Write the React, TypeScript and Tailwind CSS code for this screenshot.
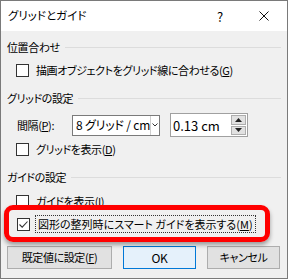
import React from "react";

const font = "font-['Noto_Sans_CJK_JP','Noto_Sans',sans-serif] [font-feature-settings:'palt']";

function Header({ children }: { children: React.ReactNode }) {
  return (
    <div className="flex items-center h-[22px] pr-[6px]">
      <span className="leading-none">{children}</span>
      <div className="flex-1 h-px bg-[#dcdcdc] ml-[5px]" />
    </div>
  );
}

function Box({ checked = false }: { checked?: boolean }) {
  return (
    <div className="w-[13px] h-[13px] border border-[#333333] bg-white flex items-center justify-center shrink-0">
      {checked && (
        <svg width="11" height="11" viewBox="0 0 11 11">
          <path d="M1.5 5.5 L4.2 8.2 L9.5 2.5" fill="none" stroke="#333" strokeWidth="1.1" />
        </svg>
      )}
    </div>
  );
}

function Check({ children, checked = false }: { children: React.ReactNode; checked?: boolean }) {
  return (
    <div className="flex items-center h-[24px] pl-[9px]">
      <Box checked={checked} />
      <span className="ml-[7px] leading-none whitespace-nowrap">{children}</span>
    </div>
  );
}

export default function App() {
  return (
    <div className={`w-[288px] h-[279px] border border-[#7a7a7a] bg-[#f0f0f0] flex flex-col text-[11px] tracking-[-0.4px] text-black ${font}`}>
      <div className="h-[30px] bg-white flex items-center shrink-0">
        <span className="pl-[7px] flex-1 leading-none text-[11.5px] tracking-normal">グリッドとガイド</span>
        <div className="w-[44px] flex justify-center text-[13px] leading-none">?</div>
        <div className="w-[44px] mr-[1px] flex justify-center">
          <svg width="10" height="10" viewBox="0 0 10 10">
            <path d="M0.5 0.5 L9.5 9.5 M9.5 0.5 L0.5 9.5" stroke="#111" strokeWidth="1" />
          </svg>
        </div>
      </div>

      <div className="flex flex-col pl-[6px] pt-[5px]">
        <Header>位置合わせ</Header>
        <Check>
          描画オブジェクトをグリッド線に合わせる(<u>G</u>)
        </Check>

        <div className="mt-[5px]">
          <Header>グリッドの設定</Header>
        </div>

        <div className="flex items-center h-[24px] mt-[4px]">
          <span className="ml-[10px] w-[55px] leading-none whitespace-nowrap">
            間隔(<u>P</u>):
          </span>
          <div className="w-[88px] h-[21px] border border-[#7a7a7a] bg-white flex items-stretch">
            <div className="flex-1 flex items-center pl-[3px] border-r border-[#cfcfcf] text-[12px] tracking-[-0.2px] leading-none whitespace-nowrap overflow-hidden">
              8 グリッド / cm
            </div>
            <div className="w-[8px] flex items-center justify-center">
              <svg width="6" height="4" viewBox="0 0 6 4">
                <path d="M0.5 0.5 L3 3 L5.5 0.5" fill="none" stroke="#333" strokeWidth="1" />
              </svg>
            </div>
          </div>
          <div className="ml-[10px] w-[78px] h-[24px] border border-[#a0a0a0] bg-white flex items-center">
            <span className="pl-[2px] flex-1 text-[13px] tracking-normal leading-none whitespace-nowrap">0.13 cm</span>
            <div className="w-[15px] h-[20px] mr-[1px] flex flex-col gap-px">
              <div className="flex-1 bg-[#e1e1e1] border border-[#adadad] flex items-center justify-center">
                <svg width="7" height="4" viewBox="0 0 7 4">
                  <path d="M0 4 L3.5 0 L7 4 Z" fill="#222" />
                </svg>
              </div>
              <div className="flex-1 bg-[#e1e1e1] border border-[#adadad] flex items-center justify-center">
                <svg width="7" height="4" viewBox="0 0 7 4">
                  <path d="M0 0 L3.5 4 L7 0 Z" fill="#222" />
                </svg>
              </div>
            </div>
          </div>
        </div>

        <Check>
          グリッドを表示(<u>D</u>)
        </Check>

        <div className="mt-[5px]">
          <Header>ガイドの設定</Header>
        </div>

        <div className="mt-[1px]">
          <Check>
            ガイドを表示(<u>I</u>)
          </Check>
        </div>

        <div className="relative flex items-center h-[24px] pl-[10px] -mt-[1px]">
          <Box checked />
          <span className="ml-[5px] px-[2px] h-[18px] flex items-center border border-dotted border-[#333] leading-none whitespace-nowrap tracking-normal">
            図形の整列時にスマート ガイドを表示する(<u>M</u>)
          </span>
          <div className="absolute left-[-3px] top-[-7px] w-[266px] h-[37px] border-[5px] border-[#ff0000] rounded-[9px] shadow-[0_3px_4px_rgba(0,0,0,0.35)]" />
        </div>

        <div className="flex mt-[10px] gap-[11px]">
          <div className="w-[105px] h-[23px] bg-[#e1e1e1] border border-[#adadad] flex items-center justify-center leading-none whitespace-nowrap">
            既定値に設定(<u>F</u>)
          </div>
          <div className="w-[73px] h-[23px] bg-[#e5f1fb] border border-[#0078d7] flex items-center justify-center leading-none text-[12px]">
            OK
          </div>
          <div className="w-[73px] h-[23px] bg-[#e1e1e1] border border-[#adadad] flex items-center justify-center leading-none whitespace-nowrap">
            キャンセル
          </div>
        </div>
      </div>
    </div>
  );
}
